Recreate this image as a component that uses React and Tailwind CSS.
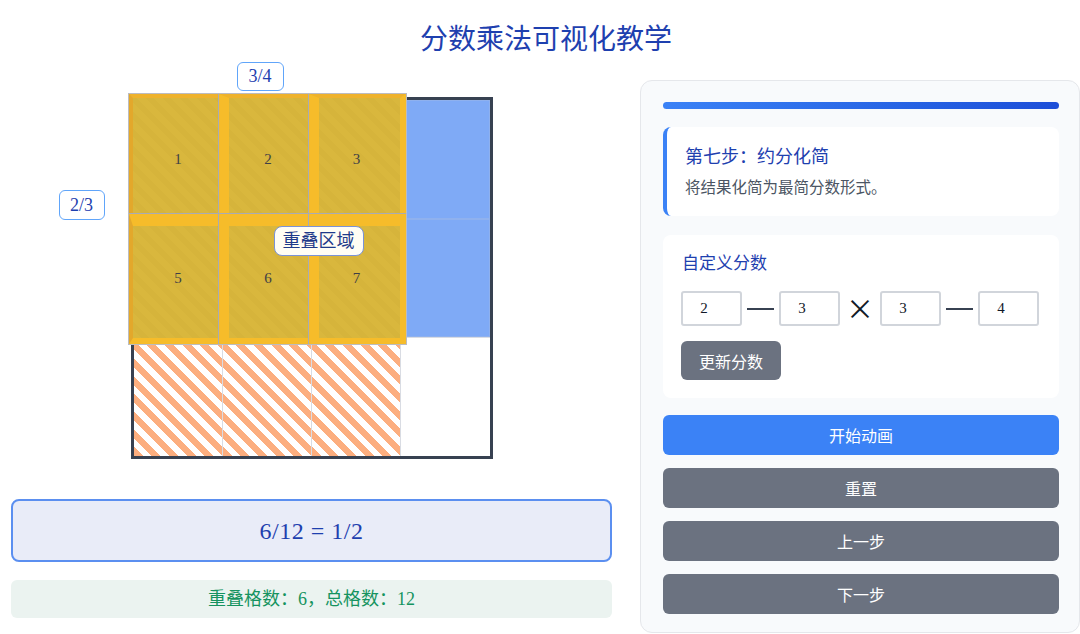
export default function App() {
  const rows = [0, 1, 2];
  const cols = [0, 1, 2, 3];
  const cellClass = (r, c) => {
    if (r < 2) return "bg-[#7faaf6] border border-[#9fb8e6]/50";
    if (c < 3)
      return "bg-[repeating-linear-gradient(45deg,#fcae7f_0,#fcae7f_6.5px,#ffffff_6.5px,#ffffff_12.5px)] border-r border-[#d9dce3]";
    return "bg-white border-t border-[#d9dce3]";
  };

  const gold =
    "bg-[repeating-linear-gradient(45deg,#d9b73d_0,#d9b73d_6px,#d6b43b_6px,#d6b43b_12px)] flex items-center justify-center text-[15px] text-[#3f3f46]";

  return (
    <div className="w-[1080px] h-[634px] overflow-hidden bg-white font-['Liberation_Serif','Noto_Sans_CJK_SC',serif]">
      <div className="h-[57px] pt-[17px] pl-[12px] text-center text-[28px] leading-[40px] text-[#1e40af] font-['Noto_Sans_CJK_SC',sans-serif]">
        分数乘法可视化教学
      </div>

      <div className="flex items-start">
        {/* Left column */}
        <div className="ml-[11px] w-[601px] shrink-0 flex flex-col">
          <div className="relative mx-auto mt-[40px] w-[362px] h-[362px]">
            <div className="w-full h-full border-[3px] border-[#374151] grid grid-cols-4 grid-rows-3">
              {rows.map((r) =>
                cols.map((c) => <div key={`${r}-${c}`} className={cellClass(r, c)} />)
              )}
            </div>

            {/* overlap overlay */}
            <div className="absolute left-[-3px] top-[-4px] w-[279px] h-[252px] grid grid-cols-[89px_89px_97px] grid-rows-[119px_130px] gap-px bg-[#a9abb4] border border-[#bcbcc0]">
              <div className={`${gold} border-l-[4px] border-l-[#e3a82b] border-t-[4px] border-t-[#eeb22c] pl-[6px] pt-[7px]`}>1</div>
              <div className={`${gold} border-l-[10px] border-l-[#f6bc2a] border-t-[4px] border-t-[#eeb22c] pt-[7px]`}>2</div>
              <div className={`${gold} border-l-[10px] border-l-[#f6bc2a] border-r-[6px] border-r-[#f6bc2a] border-t-[4px] border-t-[#eeb22c] pr-[5px] pt-[7px]`}>3</div>
              <div className={`${gold} border-l-[4px] border-l-[#e3a82b] border-t-[12px] border-t-[#f6bc2a] border-b-[6px] border-b-[#f6bc2a] pl-[6px] pb-[8px]`}>5</div>
              <div className={`${gold} border-l-[10px] border-l-[#f6bc2a] border-t-[12px] border-t-[#f6bc2a] border-b-[6px] border-b-[#f6bc2a] pb-[8px]`}>6</div>
              <div className={`${gold} border-l-[10px] border-l-[#f6bc2a] border-r-[6px] border-r-[#f6bc2a] border-t-[12px] border-t-[#f6bc2a] border-b-[6px] border-b-[#f6bc2a] pr-[5px] pb-[8px]`}>7</div>
            </div>

            {/* labels */}
            <div className="absolute left-[106px] top-[-35px] w-[47px] h-[29px] flex items-center justify-center rounded-md border border-[#60a5fa] bg-white text-[18px] text-[#1e40af]">
              3/4
            </div>
            <div className="absolute left-[-72px] top-[93px] w-[46px] h-[30px] flex items-center justify-center rounded-md border border-[#60a5fa] bg-white text-[18px] text-[#1e40af]">
              2/3
            </div>
            <div className="absolute left-[143px] top-[129px] w-[90px] h-[30px] flex items-center justify-center rounded-lg border border-[#7b93d6] bg-[#fffdf4] text-[18px] text-[#1e3a8a]">
              重叠区域
            </div>
          </div>

          <div className="mt-[40px] h-[63px] rounded-lg border-2 border-[#5b8ff0] bg-[#e9ecf8] flex items-center justify-center text-[24px] tracking-[0.5px] text-[#1e40af]">
            6/12 = 1/2
          </div>
          <div className="mt-[18px] h-[38px] rounded-md bg-[#ebf3f0] flex items-center justify-center text-[18px] text-[#15935f]">
            重叠格数：6，总格数：12
          </div>
        </div>

        {/* Right panel */}
        <div className="mt-[23px] ml-[28px] w-[440px] h-[553px] shrink-0 rounded-xl border border-[#e5e7eb] bg-[#f8fafc] pl-[22px] pr-[20px] pt-[21px] flex flex-col font-['Noto_Sans_CJK_SC',sans-serif]">
          <div className="h-[7px] rounded-full bg-linear-to-r from-[#3b82f6] to-[#1d4ed8]" />

          <div className="mt-[18px] h-[89px] rounded-lg bg-white border-l-4 border-[#3b82f6] pl-[18px] pt-[14px]">
            <div className="text-[18px] leading-[28px] text-[#1e40af]">第七步：约分化简</div>
            <div className="mt-[5px] text-[15.5px] leading-[24px] text-[#4b5563]">将结果化简为最简分数形式。</div>
          </div>

          <div className="mt-[19px] rounded-lg bg-white pl-[18px] pr-[18px] pt-[14px] pb-[18px]">
            <div className="pl-[1px] text-[17px] leading-[26px] text-[#1e40af]">自定义分数</div>
            <div className="mt-[16px] flex items-center">
              <input readOnly value="2" className="w-[61px] h-[35px] rounded-[3px] border-2 border-[#d1d5db] bg-white text-center pr-[15px] text-[15px] text-[#111827] font-['Liberation_Serif',serif] outline-none" />
              <div className="mx-[5px] w-[27px] h-[2px] bg-[#374151]" />
              <input readOnly value="3" className="w-[61px] h-[35px] rounded-[3px] border-2 border-[#d1d5db] bg-white text-center pr-[15px] text-[15px] text-[#111827] font-['Liberation_Serif',serif] outline-none" />
              <div className="w-[40px] text-center text-[28px] leading-[35px] text-[#111827]">×</div>
              <input readOnly value="3" className="w-[61px] h-[35px] rounded-[3px] border-2 border-[#d1d5db] bg-white text-center pr-[15px] text-[15px] text-[#111827] font-['Liberation_Serif',serif] outline-none" />
              <div className="mx-[5px] w-[27px] h-[2px] bg-[#374151]" />
              <input readOnly value="4" className="w-[61px] h-[35px] rounded-[3px] border-2 border-[#d1d5db] bg-white text-center pr-[15px] text-[15px] text-[#111827] font-['Liberation_Serif',serif] outline-none" />
            </div>
            <button className="mt-[15px] w-[100px] h-[39px] rounded-md bg-[#6b7280] text-white text-[16px]">
              更新分数
            </button>
          </div>

          <div className="mt-[17px] flex flex-col gap-[13px]">
            <button className="h-10 rounded-md bg-[#3b82f6] text-white text-[16px]">开始动画</button>
            <button className="h-10 rounded-md bg-[#6b7280] text-white text-[16px]">重置</button>
            <button className="h-10 rounded-md bg-[#6b7280] text-white text-[16px]">上一步</button>
            <button className="h-10 rounded-md bg-[#6b7280] text-white text-[16px]">下一步</button>
          </div>
        </div>
      </div>
    </div>
  );
}
